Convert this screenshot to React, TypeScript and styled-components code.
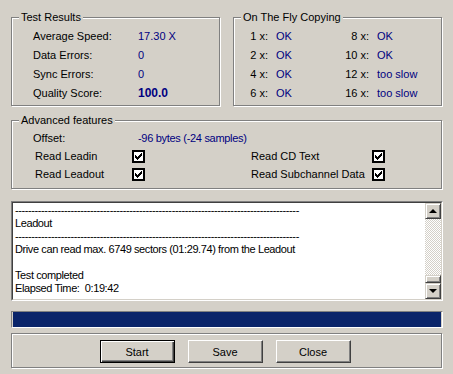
import React from 'react';
import styled, { createGlobalStyle } from 'styled-components';

const GlobalStyle = createGlobalStyle`
  body {
    margin: 0;
    background: #d4d0c8;
    font-family: "Liberation Sans", Arial, sans-serif;
    font-size: 11px;
    color: #000;
  }
`;

const Window = styled.div`
  width: 453px;
  height: 374px;
  box-sizing: border-box;
  padding: 0 10px 0 11px;
  background: #d4d0c8;
  display: flex;
  flex-direction: column;
`;

const TopRow = styled.div`
  display: flex;
  gap: 13px;
  margin-top: 17px;
`;

const Group = styled.div<{ $width?: number; $pb?: number }>`
  box-sizing: border-box;
  width: ${p => (p.$width ? `${p.$width}px` : 'auto')};
  margin-right: ${p => (p.$width ? '0' : '1px')};
  border: 1px solid #808080;
  box-shadow: inset 1px 1px 0 #fff, 1px 1px 0 #fff;
  padding-bottom: ${p => p.$pb ?? 3}px;
`;

const GroupTitle = styled.span`
  display: block;
  width: fit-content;
  margin: -7px 0 0 7px;
  padding: 0 2px;
  line-height: 13px;
  background: #d4d0c8;
`;

const StatGrid = styled.div`
  display: grid;
  grid-template-columns: 105px 1fr;
  grid-auto-rows: 19px;
  align-items: center;
  margin-top: 2px;
  padding-left: 21px;
`;

const CopyGrid = styled.div`
  display: grid;
  grid-template-columns: 42px 59px 42px 1fr;
  grid-auto-rows: 19px;
  align-items: center;
  margin-top: 2px;
`;

const Label = styled.span<{ $right?: boolean }>`
  text-align: ${p => (p.$right ? 'right' : 'left')};
  padding-right: ${p => (p.$right ? '8px' : '0')};
  white-space: nowrap;
`;

const Value = styled.span<{ $bold?: boolean }>`
  color: #000080;
  font-weight: ${p => (p.$bold ? 'bold' : 'normal')};
  font-size: ${p => (p.$bold ? '12px' : '11px')};
  white-space: nowrap;
`;

const AdvGroup = styled(Group)`
  margin-top: 14px;
`;

const OffsetRow = styled.div`
  display: grid;
  grid-template-columns: 105px 1fr;
  height: 19px;
  align-items: center;
  margin-top: 1px;
  padding-left: 21px;
`;

const OffsetValue = styled(Value)`
  letter-spacing: -0.3px;
`;

const OptionGrid = styled.div`
  display: grid;
  grid-template-columns: 97px 13px 106px 121px 13px;
  grid-auto-rows: 18px;
  align-items: center;
  padding-left: 23px;
`;

const CheckBox = styled.span`
  box-sizing: border-box;
  width: 13px;
  height: 13px;
  border: 2px solid #000;
  background: #fff;
  display: flex;
  align-items: center;
  justify-content: center;
`;

const LogBox = styled.div`
  margin-top: 12px;
  height: 100px;
  box-sizing: border-box;
  border: 1px solid;
  border-color: #808080 #fff #fff #808080;
  display: flex;
`;

const LogInner = styled.div`
  flex: 1;
  display: flex;
  border: 1px solid;
  border-color: #404040 #d4d0c8 #d4d0c8 #404040;
  background: #fff;
  min-width: 0;
`;

const LogText = styled.div`
  flex: 1;
  padding: 1px 2px;
  line-height: 13px;
  letter-spacing: -0.4px;
  white-space: pre;
  overflow: hidden;
`;

const ScrollBar = styled.div`
  width: 16px;
  display: flex;
  flex-direction: column;
`;

const ScrollButton = styled.div`
  box-sizing: border-box;
  height: 16px;
  background: #d4d0c8;
  border: 1px solid;
  border-color: #d4d0c8 #404040 #404040 #d4d0c8;
  box-shadow: inset 1px 1px 0 #fff, inset -1px -1px 0 #808080;
  display: flex;
  align-items: center;
  justify-content: center;
`;

const Arrow = styled.span<{ $down?: boolean }>`
  width: 0;
  height: 0;
  border-left: 4px solid transparent;
  border-right: 4px solid transparent;
  ${p => (p.$down ? 'border-top: 4px solid #000;' : 'border-bottom: 4px solid #000;')}
`;

const Track = styled.div`
  flex: 1;
  background: repeating-conic-gradient(#fff 0 25%, #d4d0c8 0 50%) 0 0 / 2px 2px;
`;

const Thumb = styled(ScrollButton)`
  height: 8px;
`;

const Progress = styled.div`
  margin-top: 10px;
  height: 17px;
  box-sizing: border-box;
  border: 1px solid;
  border-color: #808080 #fff #fff #808080;
  padding: 0 1px;
  display: flex;
`;

const ProgressFill = styled.div`
  flex: 1;
  background: #0a246a;
`;

const ButtonPanel = styled(Group)`
  margin-top: 5px;
  height: 35px;
  padding: 6px 3px 0 0;
  display: flex;
  justify-content: center;
  gap: 13px;
`;

const Button = styled.button<{ $default?: boolean }>`
  width: 75px;
  height: 23px;
  padding: 0;
  font-family: "Liberation Sans", Arial, sans-serif;
  font-size: 11px;
  color: #000;
  background: #d4d0c8;
  border: 1px solid;
  border-color: ${p => (p.$default ? '#000' : '#fff #404040 #404040 #fff')};
  box-shadow: ${p =>
    p.$default
      ? 'inset 1px 1px 0 #fff, inset -1px -1px 0 #404040, inset -2px -2px 0 #808080'
      : 'inset -1px -1px 0 #808080'};
`;

const CHECK_COLS = [2, 3, 4, 3, 2, 1, 0];

const Check = () => (
  <CheckBox>
    <svg width="7" height="7" viewBox="0 0 7 7" shapeRendering="crispEdges">
      {CHECK_COLS.map((y, x) => (
        <rect key={x} x={x} y={y} width="1" height="3" fill="#000" />
      ))}
    </svg>
  </CheckBox>
);

const stats = [
  { label: 'Average Speed:', value: '17.30 X' },
  { label: 'Data Errors:', value: '0' },
  { label: 'Sync Errors:', value: '0' },
  { label: 'Quality Score:', value: '100.0', bold: true },
];

const copying = [
  ['1 x:', 'OK', '8 x:', 'OK'],
  ['2 x:', 'OK', '10 x:', 'OK'],
  ['4 x:', 'OK', '12 x:', 'too slow'],
  ['6 x:', 'OK', '16 x:', 'too slow'],
];

const dashes = '-'.repeat(87);

const log = [
  dashes,
  'Leadout',
  dashes,
  'Drive can read max. 6749 sectors (01:29.74) from the Leadout',
  '',
  'Test completed',
  'Elapsed Time:  0:19:42',
];

export default function App() {
  return (
    <>
      <GlobalStyle />
      <Window>
        <TopRow>
          <Group $width={209}>
            <GroupTitle>Test Results</GroupTitle>
            <StatGrid>
              {stats.map(s => (
                <React.Fragment key={s.label}>
                  <Label>{s.label}</Label>
                  <Value $bold={s.bold}>{s.value}</Value>
                </React.Fragment>
              ))}
            </StatGrid>
          </Group>
          <Group $width={209}>
            <GroupTitle>On The Fly Copying</GroupTitle>
            <CopyGrid>
              {copying.map(row => (
                <React.Fragment key={row[0]}>
                  <Label $right>{row[0]}</Label>
                  <Value>{row[1]}</Value>
                  <Label $right>{row[2]}</Label>
                  <Value>{row[3]}</Value>
                </React.Fragment>
              ))}
            </CopyGrid>
          </Group>
        </TopRow>

        <AdvGroup $pb={5}>
          <GroupTitle>Advanced features</GroupTitle>
          <OffsetRow>
            <Label>Offset:</Label>
            <OffsetValue>-96 bytes (-24 samples)</OffsetValue>
          </OffsetRow>
          <OptionGrid>
            <Label>Read Leadin</Label>
            <Check />
            <span />
            <Label>Read CD Text</Label>
            <Check />
            <Label>Read Leadout</Label>
            <Check />
            <span />
            <Label>Read Subchannel Data</Label>
            <Check />
          </OptionGrid>
        </AdvGroup>

        <LogBox>
          <LogInner>
            <LogText>{log.join('\n')}</LogText>
            <ScrollBar>
              <ScrollButton>
                <Arrow />
              </ScrollButton>
              <Track />
              <Thumb />
              <ScrollButton>
                <Arrow $down />
              </ScrollButton>
            </ScrollBar>
          </LogInner>
        </LogBox>

        <Progress>
          <ProgressFill />
        </Progress>

        <ButtonPanel>
          <Button $default>Start</Button>
          <Button>Save</Button>
          <Button>Close</Button>
        </ButtonPanel>
      </Window>
    </>
  );
}
